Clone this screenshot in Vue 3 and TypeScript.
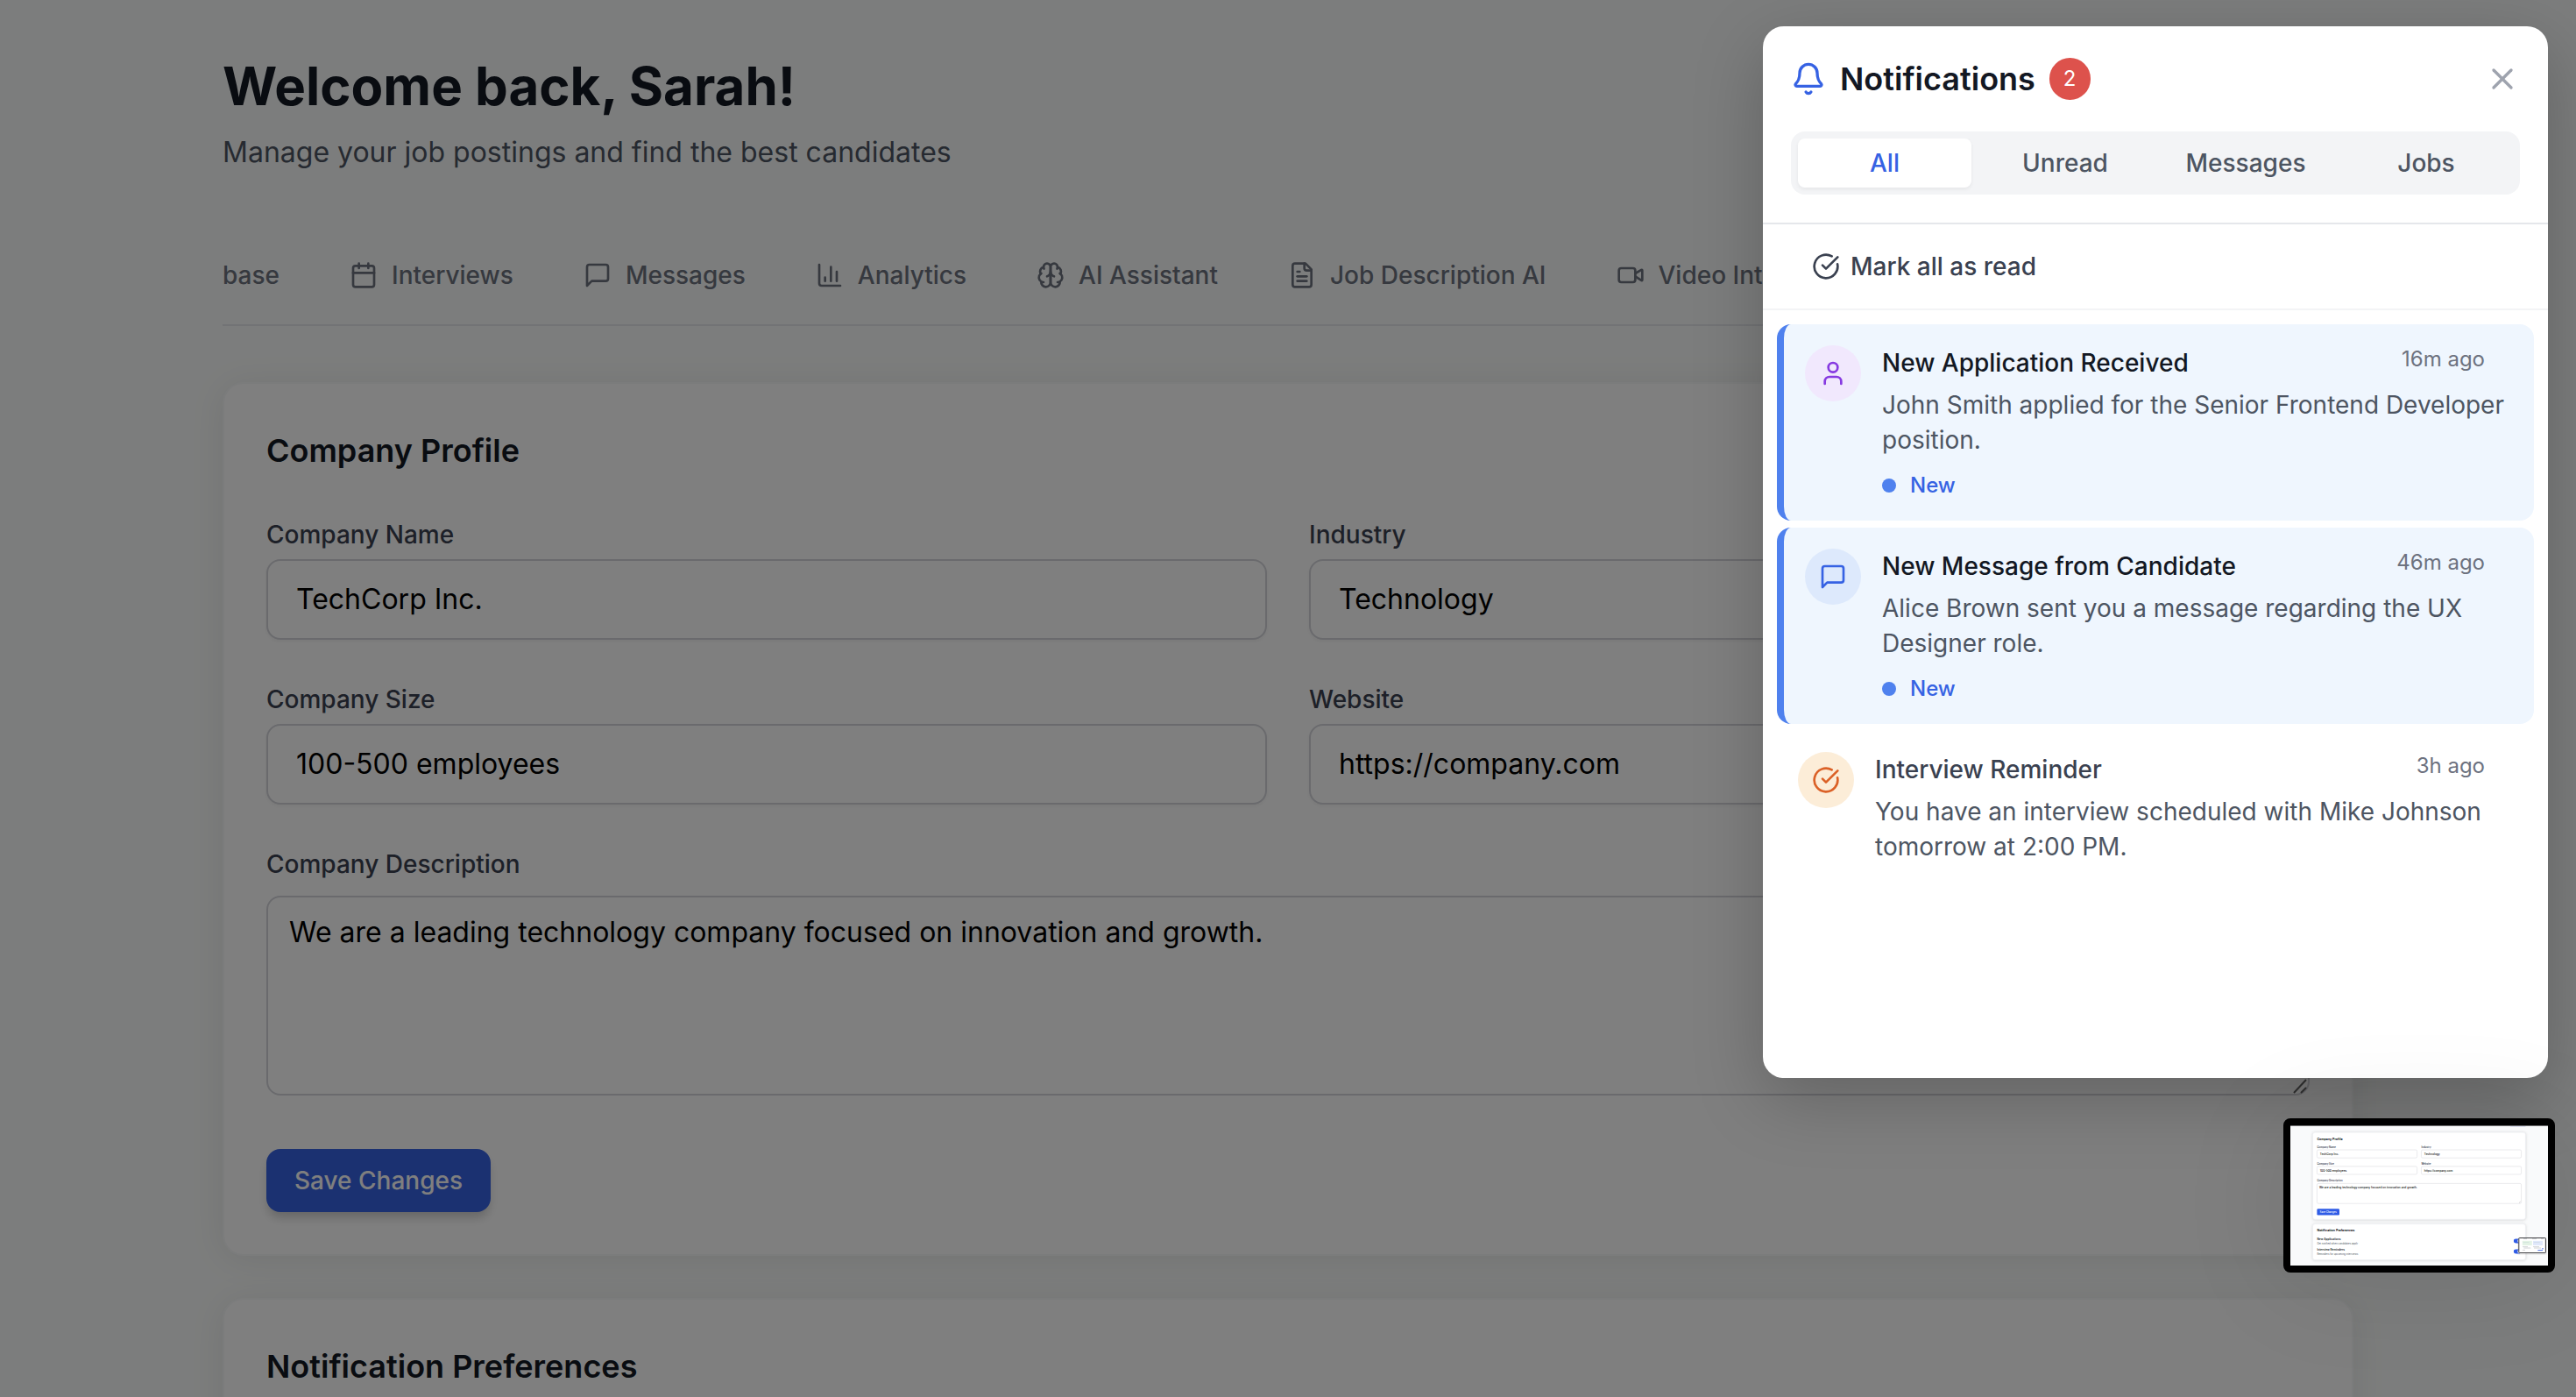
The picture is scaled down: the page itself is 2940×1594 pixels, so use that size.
<script setup lang="ts">
import { ref, computed } from 'vue'

type IconName = 'calendar' | 'message' | 'chart' | 'brain' | 'file' | 'video' | 'bell' | 'x' | 'check' | 'user'

const icons: Record<IconName, string[]> = {
  calendar: [
    'M8 2v4',
    'M16 2v4',
    'M5 4h14a2 2 0 0 1 2 2v14a2 2 0 0 1-2 2H5a2 2 0 0 1-2-2V6a2 2 0 0 1 2-2z',
    'M3 10h18',
  ],
  message: ['M21 15a2 2 0 0 1-2 2H7l-4 4V5a2 2 0 0 1 2-2h14a2 2 0 0 1 2 2z'],
  chart: ['M3 3v16a2 2 0 0 0 2 2h16', 'M18 17V9', 'M13 17V5', 'M8 17v-3'],
  brain: [
    'M12 5a3 3 0 1 0-5.997.125 4 4 0 0 0-2.526 5.77 4 4 0 0 0 .556 6.588A4 4 0 1 0 12 18Z',
    'M12 5a3 3 0 1 1 5.997.125 4 4 0 0 1 2.526 5.77 4 4 0 0 1-.556 6.588A4 4 0 1 1 12 18Z',
    'M15 13a4.5 4.5 0 0 1-3-4 4.5 4.5 0 0 1-3 4',
    'M17.599 6.5a3 3 0 0 0 .399-1.375',
    'M6.003 5.125A3 3 0 0 0 6.401 6.5',
    'M3.477 10.896a4 4 0 0 1 .585-.396',
    'M19.938 10.5a4 4 0 0 1 .585.396',
    'M6 18a4 4 0 0 1-1.967-.516',
    'M19.967 17.484A4 4 0 0 1 18 18',
  ],
  file: [
    'M15 2H6a2 2 0 0 0-2 2v16a2 2 0 0 0 2 2h12a2 2 0 0 0 2-2V7Z',
    'M14 2v4a2 2 0 0 0 2 2h4',
    'M10 9H8',
    'M16 13H8',
    'M16 17H8',
  ],
  video: [
    'm16 13 5.223 3.482a.5.5 0 0 0 .777-.416V7.87a.5.5 0 0 0-.752-.432L16 10.5',
    'M4 6h10a2 2 0 0 1 2 2v8a2 2 0 0 1-2 2H4a2 2 0 0 1-2-2V8a2 2 0 0 1 2-2z',
  ],
  bell: [
    'M10.268 21a2 2 0 0 0 3.464 0',
    'M3.262 15.326A1 1 0 0 0 4 17h16a1 1 0 0 0 .74-1.673C19.41 13.956 18 12.499 18 8A6 6 0 0 0 6 8c0 4.499-1.411 5.956-2.738 7.326',
  ],
  x: ['M18 6 6 18', 'm6 6 12 12'],
  check: ['M21.801 10A10 10 0 1 1 17 3.335', 'm9 11 3 3L22 4'],
  user: ['M19 21v-2a4 4 0 0 0-4-4H9a4 4 0 0 0-4 4v2', 'M12 3a4 4 0 1 0 0 8a4 4 0 1 0 0-8z'],
}

const navItems: { label: string; icon?: IconName }[] = [
  { label: 'base' },
  { label: 'Interviews', icon: 'calendar' },
  { label: 'Messages', icon: 'message' },
  { label: 'Analytics', icon: 'chart' },
  { label: 'AI Assistant', icon: 'brain' },
  { label: 'Job Description AI', icon: 'file' },
  { label: 'Video Interviews', icon: 'video' },
]

const fields = ref([
  { id: 'company-name', label: 'Company Name', value: 'TechCorp Inc.' },
  { id: 'industry', label: 'Industry', value: 'Technology' },
  { id: 'company-size', label: 'Company Size', value: '100-500 employees' },
  { id: 'website', label: 'Website', value: 'https://company.com' },
])
const description = ref('We are a leading technology company focused on innovation and growth.')

const tabs = ['All', 'Unread', 'Messages', 'Jobs'] as const
const activeTab = ref<(typeof tabs)[number]>('All')

interface Notice {
  title: string
  body: string
  time: string
  icon: IconName
  tone: 'purple' | 'blue' | 'orange'
  kind: 'Messages' | 'Jobs'
  unread: boolean
}

const notices = ref<Notice[]>([
  {
    title: 'New Application Received',
    body: 'John Smith applied for the Senior Frontend Developer position.',
    time: '16m ago',
    icon: 'user',
    tone: 'purple',
    kind: 'Jobs',
    unread: true,
  },
  {
    title: 'New Message from Candidate',
    body: 'Alice Brown sent you a message regarding the UX Designer role.',
    time: '46m ago',
    icon: 'message',
    tone: 'blue',
    kind: 'Messages',
    unread: true,
  },
  {
    title: 'Interview Reminder',
    body: 'You have an interview scheduled with Mike Johnson tomorrow at 2:00 PM.',
    time: '3h ago',
    icon: 'check',
    tone: 'orange',
    kind: 'Jobs',
    unread: false,
  },
])

const unreadCount = computed(() => notices.value.filter((n) => n.unread).length)
const shown = computed(() =>
  notices.value.filter((n) => {
    if (activeTab.value === 'All') return true
    if (activeTab.value === 'Unread') return n.unread
    return n.kind === activeTab.value
  }),
)

function markAllRead() {
  notices.value.forEach((n) => (n.unread = false))
}
</script>

<template>
  <div class="app">
    <main class="page">
      <header>
        <h1>Welcome back, Sarah!</h1>
        <p class="subtitle">Manage your job postings and find the best candidates</p>
      </header>

      <nav class="nav">
        <a v-for="item in navItems" :key="item.label" href="#" class="nav-item">
          <svg v-if="item.icon" class="icon" viewBox="0 0 24 24" aria-hidden="true">
            <path v-for="d in icons[item.icon]" :key="d" :d="d" />
          </svg>
          <span>{{ item.label }}</span>
        </a>
      </nav>

      <div class="cards">
        <section class="card">
          <h2>Company Profile</h2>
          <form @submit.prevent>
            <div class="fields">
              <div v-for="f in fields" :key="f.id" class="field">
                <label :for="f.id">{{ f.label }}</label>
                <input :id="f.id" v-model="f.value" type="text" />
              </div>
            </div>
            <div class="field field-wide">
              <label for="description">Company Description</label>
              <div class="area">
                <textarea id="description" v-model="description"></textarea>
                <svg class="grip" viewBox="0 0 18 18" aria-hidden="true">
                  <path d="M2 17 16 2M10 17l6-6" />
                </svg>
              </div>
            </div>
            <button class="save" type="submit">Save Changes</button>
          </form>
        </section>

        <section class="card">
          <h2>Notification Preferences</h2>
        </section>
      </div>
    </main>

    <div class="overlay"></div>

    <aside class="panel" role="dialog" aria-label="Notifications">
      <div class="panel-head">
        <div class="panel-title">
          <svg class="icon icon-lg bell" viewBox="0 0 24 24" aria-hidden="true">
            <path v-for="d in icons.bell" :key="d" :d="d" />
          </svg>
          <h2>Notifications</h2>
          <span class="badge">{{ unreadCount }}</span>
          <button class="close" type="button" aria-label="Close">
            <svg class="icon icon-lg" viewBox="0 0 24 24" aria-hidden="true">
              <path v-for="d in icons.x" :key="d" :d="d" />
            </svg>
          </button>
        </div>
        <div class="tabs" role="tablist">
          <button
            v-for="t in tabs"
            :key="t"
            type="button"
            role="tab"
            class="tab"
            :class="{ active: t === activeTab }"
            :aria-selected="t === activeTab"
            @click="activeTab = t"
          >
            {{ t }}
          </button>
        </div>
      </div>

      <div class="actions">
        <button class="mark" type="button" @click="markAllRead">
          <svg class="icon" viewBox="0 0 24 24" aria-hidden="true">
            <path v-for="d in icons.check" :key="d" :d="d" />
          </svg>
          Mark all as read
        </button>
      </div>

      <ul class="list">
        <li v-for="n in shown" :key="n.title" class="notice" :class="{ unread: n.unread }">
          <span class="avatar" :class="n.tone">
            <svg class="icon" viewBox="0 0 24 24" aria-hidden="true">
              <path v-for="d in icons[n.icon]" :key="d" :d="d" />
            </svg>
          </span>
          <div class="notice-body">
            <div class="notice-top">
              <h3>{{ n.title }}</h3>
              <time>{{ n.time }}</time>
            </div>
            <p>{{ n.body }}</p>
            <div v-if="n.unread" class="fresh"><span class="dot"></span>New</div>
          </div>
        </li>
      </ul>
    </aside>

    <div class="preview">
      <svg viewBox="0 0 2940 1600" role="img" aria-label="Page preview">
        <rect width="2940" height="1600" fill="#f9fafb" />
        <rect width="2940" height="10" fill="#6e6e70" />
        <rect x="2510" y="10" width="174" height="10" fill="#dfe3f3" />
        <g class="mini-card">
          <rect x="256" y="80" width="2428" height="994" rx="24" />
          <rect x="256" y="1126" width="2428" height="410" rx="24" />
        </g>
        <g class="mini-box">
          <rect x="304" y="280" width="1142" height="92" rx="16" />
          <rect x="1494" y="280" width="1142" height="92" rx="16" />
          <rect x="304" y="468" width="1142" height="92" rx="16" />
          <rect x="1494" y="468" width="1142" height="92" rx="16" />
          <rect x="304" y="664" width="2332" height="228" rx="16" />
        </g>
        <g class="mini-heading">
          <text x="304" y="168">Company Profile</text>
          <text x="304" y="1214">Notification Preferences</text>
        </g>
        <g class="mini-label">
          <text x="304" y="262">Company Name</text>
          <text x="1494" y="262">Industry</text>
          <text x="304" y="450">Company Size</text>
          <text x="1494" y="450">Website</text>
          <text x="304" y="638">Company Description</text>
        </g>
        <g class="mini-value">
          <text x="338" y="337">TechCorp Inc.</text>
          <text x="1528" y="337">Technology</text>
          <text x="338" y="525">100-500 employees</text>
          <text x="1528" y="525">https://company.com</text>
          <text x="330" y="717">We are a leading technology company focused on innovation and growth.</text>
        </g>
        <path d="M2612 884l14-14" stroke="#777" stroke-width="4" />
        <rect x="304" y="953" width="256" height="72" rx="12" fill="#2f5be6" />
        <text class="mini-button" x="336" y="999">Save Changes</text>
        <g class="mini-strong">
          <text x="304" y="1312">New Applications</text>
          <text x="304" y="1432">Interview Reminders</text>
        </g>
        <g class="mini-note">
          <text x="304" y="1355">Get notified when candidates apply</text>
          <text x="304" y="1475">Reminders for upcoming interviews</text>
        </g>
        <g v-for="y in [1296, 1416]" :key="y">
          <rect x="2548" :y="y" width="88" height="48" rx="24" fill="#2f5be6" />
          <circle cx="2612" :cy="y + 24" r="20" fill="#fff" />
        </g>
        <rect x="2590" y="1290" width="340" height="190" rx="20" fill="#000" opacity="0.06" />
        <rect x="2608" y="1285" width="306" height="170" rx="6" fill="#fff" stroke="#3d3d40" stroke-width="10" />
        <path d="M2660 1296h40M2760 1296h50M2860 1296h30" stroke="#b9bcc2" stroke-width="6" />
        <rect x="2648" y="1318" width="110" height="52" fill="#e3f3e6" />
        <rect x="2770" y="1318" width="110" height="52" fill="#e0e8fb" />
        <path d="M2656 1336h70M2778 1336h70" stroke="#b8cdd0" stroke-width="4" />
        <path d="M2650 1386h60M2770 1386h70M2664 1400h80M2780 1400h80M2650 1424h30" stroke="#b4b7bc" stroke-width="6" />
        <path d="M2824 1426h56M2872 1408h16" stroke="#4a70e8" stroke-width="10" />
      </svg>
    </div>
  </div>
</template>

<style>
body {
  margin: 0;
}
</style>

<style scoped>
.app {
  position: relative;
  height: 100vh;
  overflow: hidden;
  background: #f9fbfa;
  color: #131823;
  font-family: Inter, 'Liberation Sans', sans-serif;
  font-size: 28px;
  line-height: 40px;
}
*,
*::before,
*::after {
  box-sizing: border-box;
}
h1,
h2,
h3,
p,
ul {
  margin: 0;
  padding: 0;
}
button,
input,
textarea {
  font: inherit;
}
button {
  border: 0;
  background: none;
  padding: 0;
  cursor: pointer;
}
.icon {
  width: 32px;
  height: 32px;
  flex: none;
  fill: none;
  stroke: currentColor;
  stroke-width: 2;
  stroke-linecap: round;
  stroke-linejoin: round;
}
.icon-lg {
  width: 40px;
  height: 40px;
}

.page {
  max-width: 2432px;
  margin: 0 auto;
  padding-top: 62px;
}
h1 {
  font-size: 60px;
  line-height: 72px;
  font-weight: 700;
}
.subtitle {
  margin-top: 16px;
  font-size: 32px;
  line-height: 48px;
  color: #4d5562;
}
.nav {
  display: flex;
  gap: 80px;
  margin-top: 64px;
  overflow: hidden;
  border-bottom: 2px solid #e5e7eb;
}
.nav-item {
  display: flex;
  align-items: center;
  gap: 16px;
  padding: 32px 0;
  border-bottom: 4px solid transparent;
  color: #6d727f;
  font-weight: 500;
  white-space: nowrap;
  text-decoration: none;
}

.cards {
  display: flex;
  flex-direction: column;
  gap: 48px;
  padding-top: 64px;
}
.card {
  padding: 48px;
  border: 2px solid #f7f8f9;
  border-radius: 24px;
  background: #fff;
  box-shadow: 0 4px 40px rgba(0, 0, 0, 0.08);
}
h2 {
  font-size: 36px;
  line-height: 56px;
  font-weight: 600;
}
.fields {
  display: grid;
  grid-template-columns: 1fr 1fr;
  gap: 48px;
  margin-top: 48px;
}
.field {
  display: flex;
  flex-direction: column;
  gap: 8px;
}
.field-wide {
  gap: 16px;
  margin-top: 48px;
}
label {
  font-weight: 500;
  color: #3a4150;
}
input,
textarea {
  width: 100%;
  border: 2px solid #d4d5db;
  border-radius: 16px;
  background: #fff;
  color: #000;
  font-size: 32px;
  line-height: 48px;
}
input {
  height: 92px;
  padding: 0 32px 2px;
  box-shadow: 0 2px 4px rgba(0, 0, 0, 0.05);
}
.area {
  position: relative;
}
textarea {
  display: block;
  height: 228px;
  padding: 16px 24px;
  resize: none;
}
.grip {
  position: absolute;
  right: 2px;
  bottom: 2px;
  width: 18px;
  height: 18px;
  fill: none;
  stroke: #666;
  stroke-width: 2;
}
.save {
  display: block;
  margin-top: 61px;
  padding: 16px 32px;
  border-radius: 16px;
  background: #3662e3;
  color: #fff;
  font-weight: 500;
  box-shadow: 0 8px 12px -2px rgba(0, 0, 0, 0.2);
}

.overlay {
  position: absolute;
  inset: 0;
  background: rgba(0, 0, 0, 0.5);
}

.panel {
  position: absolute;
  top: 30px;
  right: 32px;
  width: 896px;
  min-height: 1200px;
  border-radius: 24px;
  background: #fff;
  box-shadow: 0 24px 80px rgba(0, 0, 0, 0.22);
}
.panel-head {
  padding: 32px;
  border-bottom: 2px solid #e5e7eb;
}
.panel-title {
  display: flex;
  align-items: center;
  gap: 16px;
  margin-bottom: 32px;
}
.bell {
  color: #3662e3;
}
.badge {
  padding: 8px 16px;
  border-radius: 24px;
  background: #dd524c;
  color: #fff;
  font-size: 24px;
  line-height: 32px;
  text-align: center;
}
.close {
  display: flex;
  margin-left: auto;
  color: #9ea3ae;
}
.tabs {
  display: grid;
  grid-template-columns: repeat(4, 1fr);
  gap: 8px;
  padding: 8px;
  border-radius: 16px;
  background: #f3f4f6;
}
.tab {
  padding: 8px 0;
  border-radius: 8px;
  color: #4d5562;
  font-weight: 500;
}
.tab.active {
  background: #fff;
  color: #3662e3;
  box-shadow: 0 2px 4px rgba(0, 0, 0, 0.06);
}
.actions {
  padding: 16px 32px;
  border-bottom: 2px solid #f3f4f6;
}
.mark {
  display: flex;
  align-items: center;
  gap: 12px;
  padding: 12px 24px;
  color: #3a4150;
  font-weight: 500;
}
.list {
  display: flex;
  flex-direction: column;
  gap: 8px;
  padding: 16px;
  list-style: none;
}
.notice {
  display: flex;
  align-items: flex-start;
  gap: 24px;
  padding: 24px;
  border-radius: 16px;
}
.notice.unread {
  border-left: 8px solid #4f81ee;
  background: #eff6fe;
}
.avatar {
  display: flex;
  flex: none;
  padding: 16px;
  border-radius: 50%;
}
.purple {
  background: #f1e8fd;
  color: #873ae1;
}
.blue {
  background: #dde9fc;
  color: #3662e3;
}
.orange {
  background: #fcedd8;
  color: #db6127;
}
.notice-body {
  flex: 1;
}
.notice-top {
  display: flex;
  align-items: flex-start;
  justify-content: space-between;
  padding-right: 32px;
}
h3 {
  font-size: 28px;
  line-height: 40px;
  font-weight: 500;
  color: #3a4150;
}
.unread h3 {
  color: #131823;
}
time {
  font-size: 24px;
  line-height: 32px;
  color: #6d727f;
}
.notice p {
  margin-top: 8px;
  color: #4d5562;
}
.fresh {
  display: flex;
  align-items: center;
  gap: 16px;
  margin-top: 16px;
  color: #3662e3;
  font-size: 24px;
  line-height: 32px;
  font-weight: 500;
}
.dot {
  width: 16px;
  height: 16px;
  border-radius: 50%;
  background: #4f81ee;
}

.preview {
  position: absolute;
  right: 24px;
  bottom: 142px;
  width: 310px;
  border: 8px solid #000;
  border-radius: 8px;
  background: #000;
  box-shadow: 0 8px 120px rgba(0, 0, 0, 0.1);
}
.preview svg {
  display: block;
  width: 100%;
}
.mini-card {
  fill: #fff;
  stroke: #eceef1;
  stroke-width: 8;
  filter: drop-shadow(0 4px 16px rgba(0, 0, 0, 0.15));
}
.mini-box {
  fill: #fff;
  stroke: #d4d5db;
  stroke-width: 5;
}
.mini-heading {
  font-size: 36px;
  font-weight: 700;
  fill: #131823;
}
.mini-label {
  font-size: 28px;
  font-weight: 600;
  fill: #3a4150;
}
.mini-value {
  font-size: 32px;
  font-weight: 500;
  fill: #000;
}
.mini-button {
  font-size: 28px;
  font-weight: 500;
  fill: #fff;
}
.mini-strong {
  font-size: 32px;
  font-weight: 600;
  fill: #131823;
}
.mini-note {
  font-size: 28px;
  fill: #4d5562;
}
</style>
